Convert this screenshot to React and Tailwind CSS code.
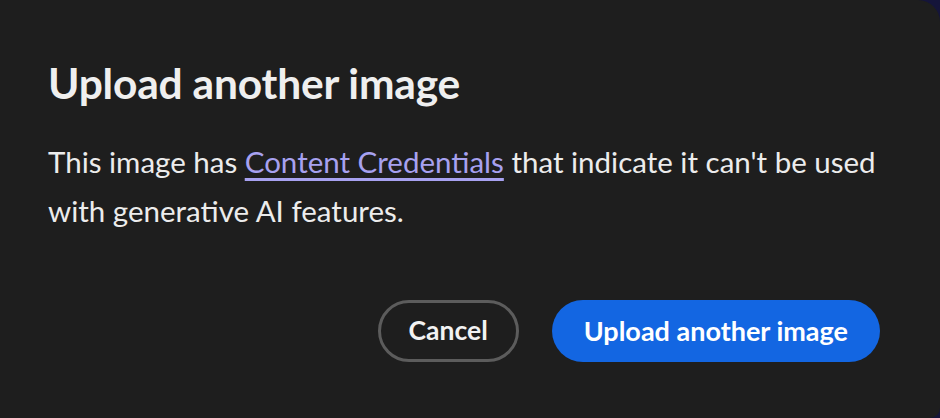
export default function App() {
  return (
    <div className="w-[940px] h-[418px] bg-[#15153a] overflow-hidden">
      <div
        className="w-full h-full bg-[#1e1e1e] rounded-tr-[22px] rounded-br-[10px] pl-[48px] pr-[60px] pt-[58px] text-[#efefef]"
        style={{ fontFamily: 'Lato, "Open Sans", sans-serif' }}
      >
        <h1 className="text-[42.5px] font-bold leading-[50px] tracking-[-0.2px]">Upload another image</h1>
        <p className="mt-[29px] max-w-[840px] text-[29.5px] leading-[49px] text-[#ececec]">
          This image has{' '}
          <a href="#" className="text-[#a7a1f0] underline decoration-[2.5px] underline-offset-[5px]">
            Content Credentials
          </a>{' '}
          that indicate it can't be used
          <br />
          with generative AI features.
        </p>
        <div className="mt-[65px] flex justify-end gap-[33px]">
          <button className="h-[62px] px-[28px] rounded-full border-[3px] border-[#5c5c5c] text-[26.5px] font-bold text-[#f2f2f2]">
            Cancel
          </button>
          <button className="h-[62px] px-[32px] rounded-full bg-[#1366e2] text-[27px] font-bold text-white">
            Upload another image
          </button>
        </div>
      </div>
    </div>
  );
}
